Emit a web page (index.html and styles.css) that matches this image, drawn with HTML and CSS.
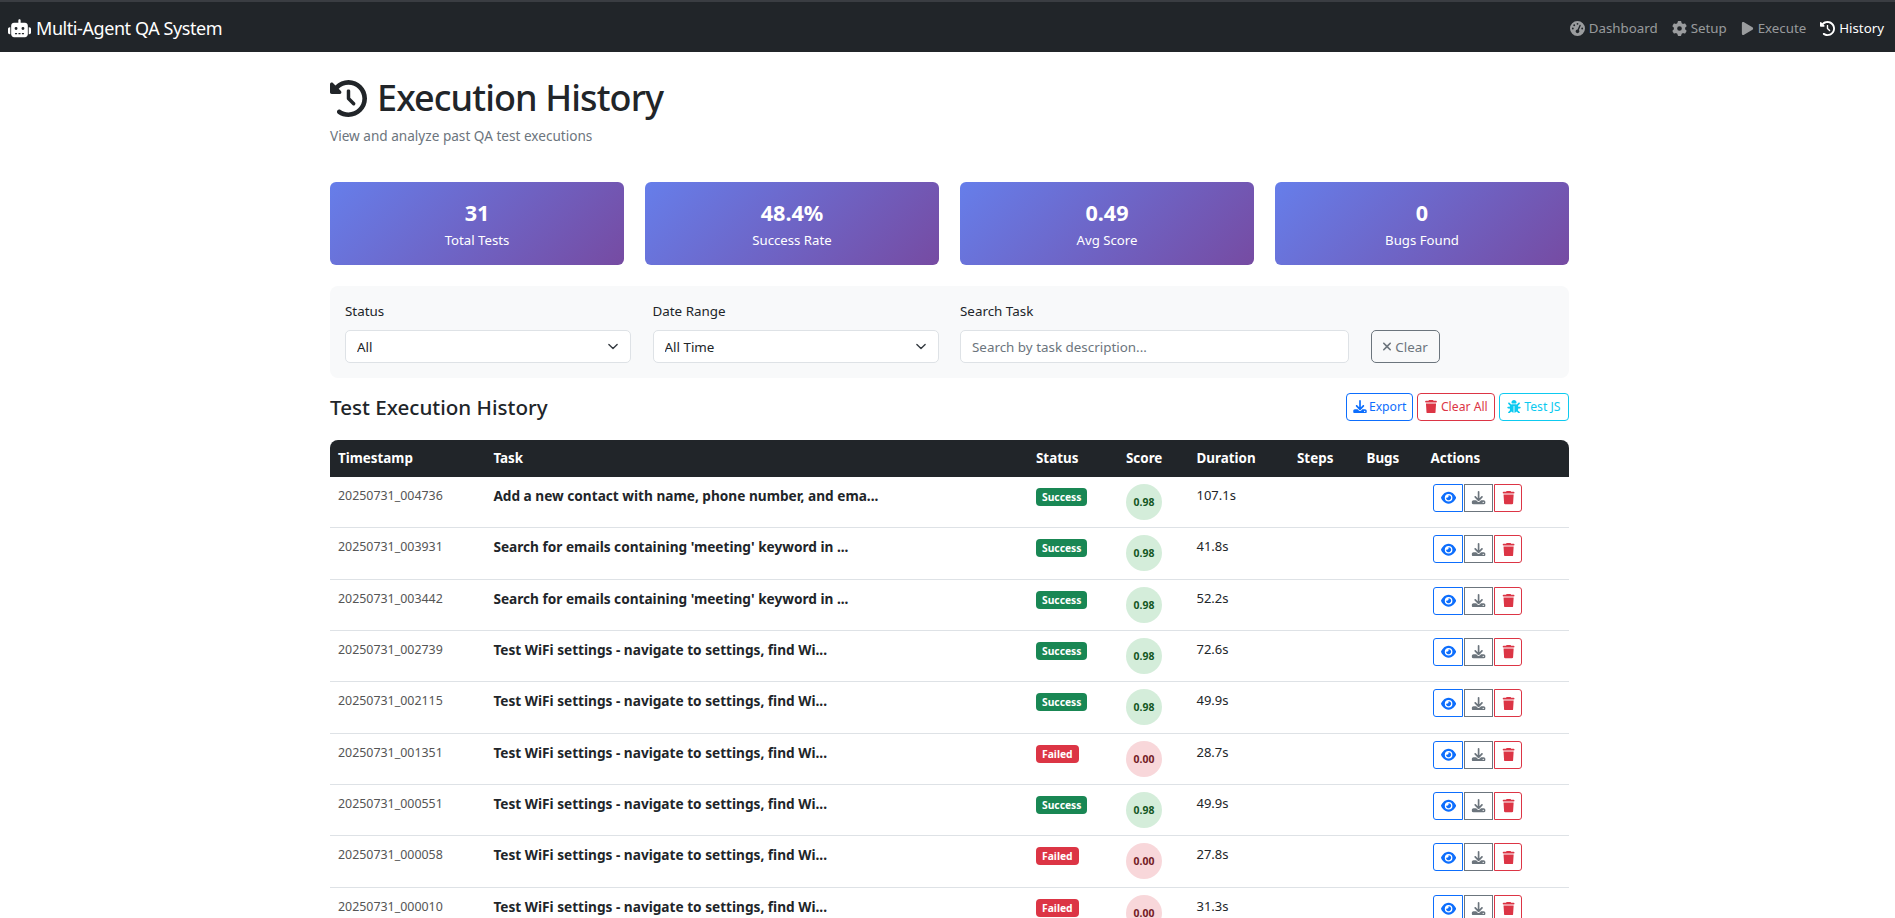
FILE: index.html
```html
<!DOCTYPE html>
<html>
  <head>
    <title>Execution History - Multi-Agent QA System</title>
    <link rel="stylesheet" href="styles.css">
  </head>
  <body>
    <svg class="sprite">
      <symbol id="i-robot" viewBox="0 0 640 512"><path d="M320 0c17.7 0 32 14.3 32 32V96H472c44.2 0 80 35.8 80 80V416c0 44.2-35.8 80-80 80H168c-44.2 0-80-35.8-80-80V176c0-44.2 35.8-80 80-80H288V32c0-17.7 14.3-32 32-32zM208 384c-8.8 0-16 7.2-16 16s7.2 16 16 16h32c8.8 0 16-7.2 16-16s-7.2-16-16-16H208zm96 0c-8.8 0-16 7.2-16 16s7.2 16 16 16h32c8.8 0 16-7.2 16-16s-7.2-16-16-16H304zm96 0c-8.8 0-16 7.2-16 16s7.2 16 16 16h32c8.8 0 16-7.2 16-16s-7.2-16-16-16H400zM264 256a40 40 0 1 0 -80 0 40 40 0 1 0 80 0zm152 40a40 40 0 1 0 0-80 40 40 0 1 0 0 80zM48 224H64V416H48c-26.5 0-48-21.5-48-48V272c0-26.5 21.5-48 48-48zm544 0c26.5 0 48 21.5 48 48v96c0 26.5-21.5 48-48 48H576V224h16z"/></symbol>
      <symbol id="i-history" viewBox="0 0 512 512"><path d="M75 75L41 41C25.9 25.9 0 36.6 0 57.9V168c0 13.3 10.7 24 24 24H134.1c21.4 0 32.1-25.9 17-41l-30.8-30.8C155 85.5 203 64 256 64c106 0 192 86 192 192s-86 192-192 192c-40.8 0-78.6-12.7-109.7-34.4c-14.5-10.1-34.4-6.6-44.6 7.9s-6.6 34.4 7.9 44.6C151.2 495 201.7 512 256 512c141.4 0 256-114.6 256-256S397.4 0 256 0C185.3 0 121.3 28.7 75 75zm181 53c-13.3 0-24 10.7-24 24V256c0 6.4 2.5 12.5 7 17l72 72c9.4 9.4 24.6 9.4 33.9 0s9.4-24.6 0-33.9l-65-65V152c0-13.3-10.7-24-24-24z"/></symbol>
      <symbol id="i-gauge" viewBox="0 0 512 512"><path d="M0 256a256 256 0 1 1 512 0A256 256 0 1 1 0 256zM288 96a32 32 0 1 0 -64 0 32 32 0 1 0 64 0zM256 416c35.3 0 64-28.7 64-64c0-17.4-6.9-33.1-18.1-44.6L366 161.7c5.3-12.1-.2-26.3-12.3-31.6s-26.3 .2-31.6 12.3L257.9 288c-.6 0-1.3 0-1.9 0c-35.3 0-64 28.7-64 64s28.7 64 64 64zM176 144a32 32 0 1 0 -64 0 32 32 0 1 0 64 0zM96 288a32 32 0 1 0 0-64 32 32 0 1 0 0 64zm352-32a32 32 0 1 0 -64 0 32 32 0 1 0 64 0z"/></symbol>
      <symbol id="i-gear" viewBox="0 0 512 512"><path d="M495.9 166.6c3.2 8.7 .5 18.4-6.4 24.6l-43.3 39.4c1.1 8.3 1.7 16.8 1.7 25.4s-.6 17.1-1.7 25.4l43.3 39.4c6.9 6.2 9.6 15.9 6.4 24.6c-4.4 11.9-9.7 23.3-15.8 34.3l-4.7 8.1c-6.6 11-14 21.4-22.1 31.2c-5.9 7.2-15.7 9.6-24.5 6.8l-55.7-17.7c-13.4 10.3-28.2 18.9-44 25.4l-12.5 57.1c-2 9.1-9 16.3-18.2 17.8c-13.8 2.3-28 3.5-42.5 3.5s-28.7-1.2-42.5-3.5c-9.2-1.5-16.2-8.7-18.2-17.8l-12.5-57.1c-15.8-6.5-30.6-15.1-44-25.4L83.1 425.9c-8.8 2.8-18.6 .3-24.5-6.8c-8.1-9.8-15.5-20.2-22.1-31.2l-4.7-8.1c-6.1-11-11.4-22.4-15.8-34.3c-3.2-8.7-.5-18.4 6.4-24.6l43.3-39.4C64.6 273.1 64 264.6 64 256s.6-17.1 1.7-25.4L22.4 191.2c-6.9-6.2-9.6-15.9-6.4-24.6c4.4-11.9 9.7-23.3 15.8-34.3l4.7-8.1c6.6-11 14-21.4 22.1-31.2c5.9-7.2 15.7-9.6 24.5-6.8l55.7 17.7c13.4-10.3 28.2-18.9 44-25.4l12.5-57.1c2-9.1 9-16.3 18.2-17.8C227.3 1.2 241.5 0 256 0s28.7 1.2 42.5 3.5c9.2 1.5 16.2 8.7 18.2 17.8l12.5 57.1c15.8 6.5 30.6 15.1 44 25.4l55.7-17.7c8.8-2.8 18.6-.3 24.5 6.8c8.1 9.8 15.5 20.2 22.1 31.2l4.7 8.1c6.1 11 11.4 22.4 15.8 34.3zM256 336a80 80 0 1 0 0-160 80 80 0 1 0 0 160z"/></symbol>
      <symbol id="i-play" viewBox="0 0 384 512"><path d="M73 39c-14.8-9.1-33.4-9.4-48.5-.9S0 62.6 0 80V432c0 17.4 9.4 33.4 24.5 41.9s33.7 8.1 48.5-.9L361 297c14.3-8.7 23-24.2 23-41s-8.7-32.2-23-41L73 39z"/></symbol>
      <symbol id="i-x" viewBox="0 0 384 512"><path d="M342.6 150.6c12.5-12.5 12.5-32.8 0-45.3s-32.8-12.5-45.3 0L192 210.7 86.6 105.4c-12.5-12.5-32.8-12.5-45.3 0s-12.5 32.8 0 45.3L146.7 256 41.4 361.4c-12.5 12.5-12.5 32.8 0 45.3s32.8 12.5 45.3 0L192 301.3 297.4 406.6c12.5 12.5 32.8 12.5 45.3 0s12.5-32.8 0-45.3L237.3 256 342.6 150.6z"/></symbol>
      <symbol id="i-download" viewBox="0 0 512 512"><path d="M288 32c0-17.7-14.3-32-32-32s-32 14.3-32 32V274.7l-73.4-73.4c-12.5-12.5-32.8-12.5-45.3 0s-12.5 32.8 0 45.3l128 128c12.5 12.5 32.8 12.5 45.3 0l128-128c12.5-12.5 12.5-32.8 0-45.3s-32.8-12.5-45.3 0L288 274.7V32zM64 352c-35.3 0-64 28.7-64 64v32c0 35.3 28.7 64 64 64H448c35.3 0 64-28.7 64-64V416c0-35.3-28.7-64-64-64H346.5l-45.3 45.3c-25 25-65.5 25-90.5 0L165.5 352H64zm368 56a24 24 0 1 1 0 48 24 24 0 1 1 0-48z"/></symbol>
      <symbol id="i-trash" viewBox="0 0 448 512"><path d="M135.2 17.7L128 32H32C14.3 32 0 46.3 0 64S14.3 96 32 96H416c17.7 0 32-14.3 32-32s-14.3-32-32-32H320l-7.2-14.3C307.4 6.8 296.3 0 284.2 0H163.8c-12.1 0-23.2 6.8-28.6 17.7zM416 128H32L53.2 467c1.6 25.3 22.6 45 47.9 45H346.9c25.3 0 46.3-19.7 47.9-45L416 128z"/></symbol>
      <symbol id="i-bug" viewBox="0 0 512 512"><path d="M256 0c53 0 96 43 96 96v3.6c0 15.7-12.7 28.4-28.4 28.4H188.4c-15.7 0-28.4-12.7-28.4-28.4V96c0-53 43-96 96-96zM41.4 105.4c12.5-12.5 32.8-12.5 45.3 0l64 64c.7 .7 1.3 1.4 1.9 2.1c14.2-7.3 30.4-11.4 47.5-11.4H312c17.1 0 33.2 4.1 47.5 11.4c.6-.7 1.2-1.4 1.9-2.1l64-64c12.5-12.5 32.8-12.5 45.3 0s12.5 32.8 0 45.3l-64 64c-.7 .7-1.4 1.3-2.1 1.9c6.2 12 10.1 25.3 11.1 39.5H480c17.7 0 32 14.3 32 32s-14.3 32-32 32H416c0 24.6-5.5 47.8-15.4 68.6c2.2 1.3 4.2 2.9 6 4.8l64 64c12.5 12.5 12.5 32.8 0 45.3s-32.8 12.5-45.3 0l-63.1-63.1c-24.5 21.8-55.8 36.2-90.3 39.6V240c0-8.8-7.2-16-16-16s-16 7.2-16 16V479.2c-34.5-3.4-65.8-17.8-90.3-39.6L86.6 502.6c-12.5 12.5-32.8 12.5-45.3 0s-12.5-32.8 0-45.3l64-64c1.9-1.9 3.9-3.4 6-4.8C101.5 367.8 96 344.6 96 320H32c-17.7 0-32-14.3-32-32s14.3-32 32-32H96.3c1.1-14.1 5-27.5 11.1-39.5c-.7-.6-1.4-1.2-2.1-1.9l-64-64c-12.5-12.5-12.5-32.8 0-45.3z"/></symbol>
      <symbol id="i-eye" viewBox="0 0 576 512"><path d="M288 32c-80.8 0-145.5 36.8-192.6 80.6C48.6 156 17.3 208 2.5 243.7c-3.3 7.9-3.3 16.7 0 24.6C17.3 304 48.6 356 95.4 399.4C142.5 443.2 207.2 480 288 480s145.5-36.8 192.6-80.6c46.8-43.5 78.1-95.4 92.9-131.1c3.3-7.9 3.3-16.7 0-24.6c-14.8-35.7-46.1-87.7-92.9-131.1C433.5 68.8 368.8 32 288 32zM144 256a144 144 0 1 1 288 0 144 144 0 1 1 -288 0zm144-64c0 35.3-28.7 64-64 64c-7.1 0-13.9-1.2-20.3-3.3c-5.5-1.8-11.9 1.6-11.7 7.4c.3 6.9 1.3 13.8 3.2 20.7c13.7 51.2 66.4 81.6 117.6 67.9s81.6-66.4 67.9-117.6c-11.1-41.5-47.8-69.4-88.6-71.1c-5.8-.2-9.2 6.1-7.4 11.7c2.1 6.4 3.3 13.2 3.3 20.3z"/></symbol>
    </svg>

    <nav class="navbar">
      <a class="brand"><svg class="brand-icon"><use href="#i-robot"/></svg>Multi-Agent QA System</a>
      <div class="nav-links">
        <a class="nav-link"><svg class="icon"><use href="#i-gauge"/></svg>Dashboard</a>
        <a class="nav-link"><svg class="icon"><use href="#i-gear"/></svg>Setup</a>
        <a class="nav-link"><svg class="icon play"><use href="#i-play"/></svg>Execute</a>
        <a class="nav-link active"><svg class="icon"><use href="#i-history"/></svg>History</a>
      </div>
    </nav>

    <div class="main">
      <h1 class="page-title"><svg class="title-icon"><use href="#i-history"/></svg>Execution History</h1>
      <p class="subtitle">View and analyze past QA test executions</p>

      <div class="stats">
        <div class="stat-card"><div class="stat-num">31</div><div class="stat-label">Total Tests</div></div>
        <div class="stat-card"><div class="stat-num">48.4%</div><div class="stat-label">Success Rate</div></div>
        <div class="stat-card"><div class="stat-num">0.49</div><div class="stat-label">Avg Score</div></div>
        <div class="stat-card"><div class="stat-num">0</div><div class="stat-label">Bugs Found</div></div>
      </div>

      <div class="filters">
        <div>
          <label class="filter-label">Status</label>
          <select class="control select"><option>All</option></select>
        </div>
        <div>
          <label class="filter-label">Date Range</label>
          <select class="control select"><option>All Time</option></select>
        </div>
        <div>
          <label class="filter-label">Search Task</label>
          <input class="control" type="text" placeholder="Search by task description...">
        </div>
        <button class="clear-btn"><svg class="icon x"><use href="#i-x"/></svg>Clear</button>
      </div>

      <div class="table-head">
        <h4 class="table-title">Test Execution History</h4>
        <div class="table-actions">
          <button class="btn blue"><svg class="icon"><use href="#i-download"/></svg>Export</button>
          <button class="btn red"><svg class="icon"><use href="#i-trash"/></svg>Clear All</button>
          <button class="btn cyan"><svg class="icon"><use href="#i-bug"/></svg>Test JS</button>
        </div>
      </div>

      <table class="history">
        <colgroup>
          <col class="c-time"><col class="c-task"><col class="c-status"><col class="c-score">
          <col class="c-duration"><col class="c-steps"><col class="c-bugs"><col class="c-actions">
        </colgroup>
        <thead>
          <tr><th>Timestamp</th><th>Task</th><th>Status</th><th>Score</th><th>Duration</th><th>Steps</th><th>Bugs</th><th>Actions</th></tr>
        </thead>
        <tbody id="rows">
          <tr>
            <td class="time">20250731_004736</td><td class="task">Add a new contact with name, phone number, and ema...</td>
            <td><span class="badge ok">Success</span></td><td><span class="score ok">0.98</span></td>
            <td class="dur">107.1s</td><td></td><td></td>
            <td><div class="row-btns"><button class="rb blue"><svg class="icon"><use href="#i-eye"/></svg></button><button class="rb grey"><svg class="icon"><use href="#i-download"/></svg></button><button class="rb red"><svg class="icon"><use href="#i-trash"/></svg></button></div></td>
          </tr>
          <tr>
            <td class="time">20250731_003931</td><td class="task">Search for emails containing 'meeting' keyword in ...</td>
            <td><span class="badge ok">Success</span></td><td><span class="score ok">0.98</span></td>
            <td class="dur">41.8s</td><td></td><td></td>
            <td><div class="row-btns"><button class="rb blue"><svg class="icon"><use href="#i-eye"/></svg></button><button class="rb grey"><svg class="icon"><use href="#i-download"/></svg></button><button class="rb red"><svg class="icon"><use href="#i-trash"/></svg></button></div></td>
          </tr>
          <tr>
            <td class="time">20250731_003442</td><td class="task">Search for emails containing 'meeting' keyword in ...</td>
            <td><span class="badge ok">Success</span></td><td><span class="score ok">0.98</span></td>
            <td class="dur">52.2s</td><td></td><td></td>
            <td><div class="row-btns"><button class="rb blue"><svg class="icon"><use href="#i-eye"/></svg></button><button class="rb grey"><svg class="icon"><use href="#i-download"/></svg></button><button class="rb red"><svg class="icon"><use href="#i-trash"/></svg></button></div></td>
          </tr>
          <tr>
            <td class="time">20250731_002739</td><td class="task">Test WiFi settings - navigate to settings, find Wi...</td>
            <td><span class="badge ok">Success</span></td><td><span class="score ok">0.98</span></td>
            <td class="dur">72.6s</td><td></td><td></td>
            <td><div class="row-btns"><button class="rb blue"><svg class="icon"><use href="#i-eye"/></svg></button><button class="rb grey"><svg class="icon"><use href="#i-download"/></svg></button><button class="rb red"><svg class="icon"><use href="#i-trash"/></svg></button></div></td>
          </tr>
          <tr>
            <td class="time">20250731_002115</td><td class="task">Test WiFi settings - navigate to settings, find Wi...</td>
            <td><span class="badge ok">Success</span></td><td><span class="score ok">0.98</span></td>
            <td class="dur">49.9s</td><td></td><td></td>
            <td><div class="row-btns"><button class="rb blue"><svg class="icon"><use href="#i-eye"/></svg></button><button class="rb grey"><svg class="icon"><use href="#i-download"/></svg></button><button class="rb red"><svg class="icon"><use href="#i-trash"/></svg></button></div></td>
          </tr>
          <tr>
            <td class="time">20250731_001351</td><td class="task">Test WiFi settings - navigate to settings, find Wi...</td>
            <td><span class="badge bad">Failed</span></td><td><span class="score bad">0.00</span></td>
            <td class="dur">28.7s</td><td></td><td></td>
            <td><div class="row-btns"><button class="rb blue"><svg class="icon"><use href="#i-eye"/></svg></button><button class="rb grey"><svg class="icon"><use href="#i-download"/></svg></button><button class="rb red"><svg class="icon"><use href="#i-trash"/></svg></button></div></td>
          </tr>
          <tr>
            <td class="time">20250731_000551</td><td class="task">Test WiFi settings - navigate to settings, find Wi...</td>
            <td><span class="badge ok">Success</span></td><td><span class="score ok">0.98</span></td>
            <td class="dur">49.9s</td><td></td><td></td>
            <td><div class="row-btns"><button class="rb blue"><svg class="icon"><use href="#i-eye"/></svg></button><button class="rb grey"><svg class="icon"><use href="#i-download"/></svg></button><button class="rb red"><svg class="icon"><use href="#i-trash"/></svg></button></div></td>
          </tr>
          <tr>
            <td class="time">20250731_000058</td><td class="task">Test WiFi settings - navigate to settings, find Wi...</td>
            <td><span class="badge bad">Failed</span></td><td><span class="score bad">0.00</span></td>
            <td class="dur">27.8s</td><td></td><td></td>
            <td><div class="row-btns"><button class="rb blue"><svg class="icon"><use href="#i-eye"/></svg></button><button class="rb grey"><svg class="icon"><use href="#i-download"/></svg></button><button class="rb red"><svg class="icon"><use href="#i-trash"/></svg></button></div></td>
          </tr>
          <tr>
            <td class="time">20250731_000010</td><td class="task">Test WiFi settings - navigate to settings, find Wi...</td>
            <td><span class="badge bad">Failed</span></td><td><span class="score bad">0.00</span></td>
            <td class="dur">31.3s</td><td></td><td></td>
            <td><div class="row-btns"><button class="rb blue"><svg class="icon"><use href="#i-eye"/></svg></button><button class="rb grey"><svg class="icon"><use href="#i-download"/></svg></button><button class="rb red"><svg class="icon"><use href="#i-trash"/></svg></button></div></td>
          </tr>
        </tbody>
      </table>
    </div>
  </body>
</html>
```

FILE: styles.css
```css
* {
  box-sizing: border-box;
}
html,
body {
  height: 100%;
  overflow: hidden;
}
body {
  margin: 0;
  background: #fff;
  color: #212529;
  font-family: "Noto Sans", "Open Sans", sans-serif;
  font-size: 13px;
}
.sprite {
  display: none;
}
.icon {
  width: 1em;
  height: 1em;
  fill: currentColor;
  flex: none;
}

/* navbar */
.navbar {
  display: flex;
  justify-content: space-between;
  align-items: center;
  height: 52px;
  padding: 2px 11px 0 8px;
  border-top: 2px solid #3a3d42;
  background: #212529;
}
.brand {
  display: flex;
  align-items: center;
  gap: 5px;
  color: #fff;
  font-size: 18px;
  letter-spacing: -.43px;
}
.brand-icon {
  width: 23px;
  height: 19px;
  fill: #fff;
}
.nav-links {
  display: flex;
  gap: 14px;
}
.nav-link {
  display: flex;
  align-items: center;
  gap: 4px;
  color: rgba(255, 255, 255, .55);
  font-size: 13.3px;
}
.nav-link .icon {
  width: 15px;
  height: 15px;
}
.nav-link .play {
  width: 13px;
}
.nav-link.active {
  color: #fff;
}

/* header */
.main {
  width: 1239px;
  margin-left: 330px;
}
.page-title {
  display: flex;
  align-items: center;
  gap: 10px;
  margin: 22px 0 0;
  color: #212529;
  font-size: 36px;
  font-weight: 500;
  letter-spacing: -.9px;
  line-height: 48px;
}
.title-icon {
  width: 37px;
  height: 37px;
  fill: #212529;
}
.subtitle {
  margin: 3px 0 0;
  color: #6c757d;
  font-size: 13.6px;
  line-height: 21px;
}

/* stat cards */
.stats {
  display: grid;
  grid-template-columns: repeat(4, 1fr);
  column-gap: 21px;
  margin-top: 36px;
}
.stat-card {
  height: 83px;
  padding-top: 18px;
  border-radius: 6px;
  background: linear-gradient(135deg, #667eea, #764ba2);
  color: #fff;
  text-align: center;
}
.stat-num {
  font-size: 21.6px;
  font-weight: 700;
  line-height: 26px;
}
.stat-label {
  margin-top: 4px;
  font-size: 13.2px;
  line-height: 20px;
}

/* filters */
.filters {
  display: grid;
  grid-template-columns: 286px 286px 389px 69px;
  column-gap: 21.5px;
  align-items: end;
  align-content: start;
  height: 92px;
  margin-top: 21px;
  padding: 15px 15px 0;
  border-radius: 8px;
  background: #f8f9fa;
}
.filter-label {
  display: block;
  margin-bottom: 8px;
  font-size: 13.4px;
  line-height: 21px;
}
.control {
  display: block;
  width: 100%;
  height: 33px;
  padding: 0 11px;
  border: 1px solid #dee2e6;
  border-radius: 5px;
  outline: 0;
  background-color: #fff;
  color: #212529;
  font-family: inherit;
  font-size: 13.4px;
}
.control::placeholder {
  color: #6c757d;
}
.select {
  appearance: none;
  background-image: url("data:image/svg+xml,%3csvg xmlns='http://www.w3.org/2000/svg' viewBox='0 0 16 16'%3e%3cpath fill='none' stroke='%23343a40' stroke-linecap='round' stroke-linejoin='round' stroke-width='2' d='m2 5 6 6 6-6'/%3e%3c/svg%3e");
  background-repeat: no-repeat;
  background-position: right 10px center;
  background-size: 14px 11px;
}
.clear-btn {
  display: flex;
  align-items: center;
  justify-content: center;
  gap: 3px;
  height: 33px;
  padding: 0;
  border: 1px solid #6c757d;
  border-radius: 5px;
  background: transparent;
  color: #6c757d;
  font-family: inherit;
  font-size: 13.4px;
}
.clear-btn .x {
  width: 10px;
  height: 13px;
}

/* table heading */
.table-head {
  display: flex;
  justify-content: space-between;
  align-items: center;
  height: 62px;
  padding-bottom: 5px;
}
.table-title {
  margin: 0;
  font-size: 20.6px;
  font-weight: 500;
}
.table-actions {
  display: flex;
  gap: 4px;
}
.btn {
  display: flex;
  align-items: center;
  justify-content: center;
  gap: 2px;
  height: 28px;
  padding: 0 5.5px;
  border: 1px solid;
  border-radius: 4px;
  background: transparent;
  font-family: inherit;
  font-size: 12.2px;
}
.btn .icon {
  width: 14px;
  height: 13.5px;
}
.btn.red {
  gap: 3px;
  padding: 0 6px;
}
.btn.cyan {
  gap: 3px;
  padding: 0 7.5px;
}
.blue {
  color: #0d6efd;
}
.red {
  color: #dc3545;
}
.cyan {
  color: #0dcaf0;
}
.grey {
  color: #6c757d;
}

/* table */
.history {
  width: 1239px;
  table-layout: fixed;
  border-collapse: separate;
  border-spacing: 0;
}
.c-time { width: 155.4px; }
.c-task { width: 542.6px; }
.c-status { width: 90px; }
.c-score { width: 70.5px; }
.c-duration { width: 100.5px; }
.c-steps { width: 69.5px; }
.c-bugs { width: 64px; }
.c-actions { width: 146.5px; }
.history th {
  height: 37px;
  padding: 0 8px 2px;
  background: #212529;
  color: #fff;
  font-size: 13.4px;
  font-weight: 700;
  text-align: left;
}
.history th:first-child {
  border-top-left-radius: 8px;
}
.history th:last-child {
  border-top-right-radius: 8px;
}
.history td {
  height: 51.33px;
  padding: 7px 8px 0;
  border-bottom: 1px solid #dee2e6;
  vertical-align: top;
  line-height: 20px;
}
.history td.time {
  padding-top: 9px;
  color: #555;
  font-size: 12.4px;
}
.history td.task {
  padding-top: 9px;
  font-size: 13.65px;
  font-weight: 700;
}
.history td.dur {
  padding-top: 8px;
  font-size: 13px;
}
.badge {
  display: block;
  width: fit-content;
  margin-top: 4px;
  padding: 0 6px;
  border-radius: 4px;
  color: #fff;
  font-size: 10.3px;
  font-weight: 700;
  line-height: 18px;
}
.badge.ok {
  background: #198754;
}
.badge.bad {
  background: #dc3545;
}
.score {
  display: flex;
  align-items: center;
  justify-content: center;
  width: 36px;
  height: 36px;
  border-radius: 50%;
  font-size: 10.4px;
  font-weight: 700;
}
.score.ok {
  background: #d4edda;
  color: #155724;
}
.score.bad {
  background: #f8d7da;
  color: #721c24;
}
.row-btns {
  display: flex;
  gap: 1px;
  margin-left: 3px;
}
.rb {
  display: flex;
  align-items: center;
  justify-content: center;
  width: 29px;
  height: 28px;
  padding: 0;
  border: 1px solid;
  background: transparent;
  font-size: 13px;
}
.rb .icon {
  width: 15.2px;
  height: 13.5px;
}
.rb:first-child {
  width: 30px;
  border-radius: 3px 0 0 3px;
}
.rb:last-child {
  width: 28px;
  border-radius: 0 3px 3px 0;
}
```
